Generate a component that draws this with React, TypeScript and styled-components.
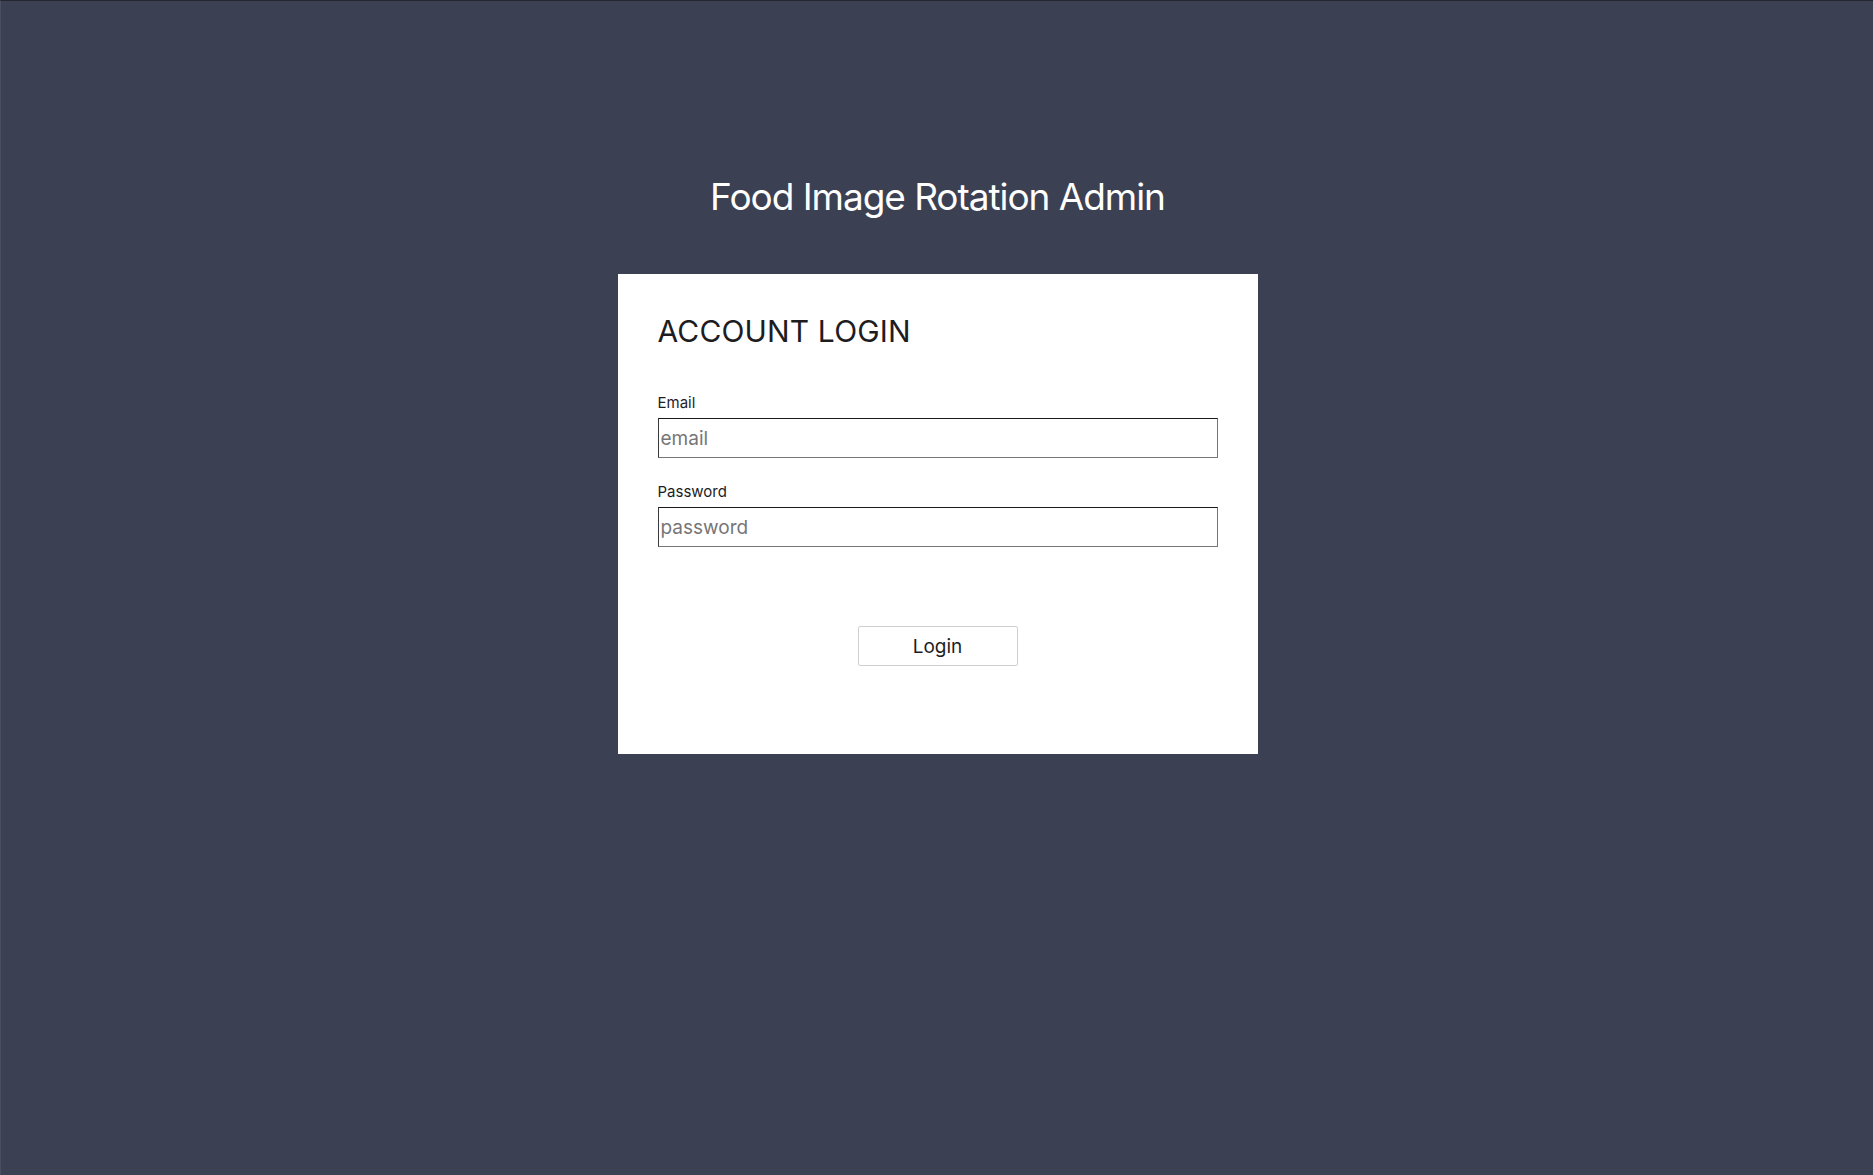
import React from "react";
import styled, { createGlobalStyle } from "styled-components";

const GlobalStyle = createGlobalStyle`
  html, body {
    margin: 0;
    padding: 0;
    height: 100%;
    background: #3c4053;
  }
  body {
    font-family: Inter, "Noto Sans", "Liberation Sans", sans-serif;
  }
  * { box-sizing: border-box; }
`;

const Page = styled.main`
  min-height: 100vh;
  background: #3c4053;
  border-top: 1px solid #24262f;
  border-left: 1px solid #4a4e62;
  display: flex;
  flex-direction: column;
  align-items: center;
  padding-top: 173px;
  padding-left: 1px;
`;

const Title = styled.h1`
  margin: 0 0 55px;
  font-size: 37px;
  font-weight: 400;
  line-height: 45px;
  color: #ffffff;
  letter-spacing: -1.05px;
`;

const Card = styled.section`
  width: 640px;
  height: 480px;
  background: #ffffff;
  padding: 39px 40px 40px;
  display: flex;
  flex-direction: column;
`;

const Heading = styled.h2`
  margin: 0 0 44px;
  font-size: 30px;
  font-weight: 400;
  line-height: 36px;
  color: #1d1d1f;
  letter-spacing: 0.15px;
`;

const Form = styled.form`
  display: flex;
  flex-direction: column;
  gap: 24px;
`;

const Field = styled.div`
  display: flex;
  flex-direction: column;
  gap: 6px;
`;

const Label = styled.label`
  font-size: 15px;
  line-height: 19px;
  color: #1d1d1f;
`;

const Input = styled.input`
  width: 560px;
  height: 40px;
  padding: 0 2px;
  margin: 0;
  font-family: Inter, "Noto Sans", "Liberation Sans", sans-serif;
  font-size: 19px;
  color: #1d1d1f;
  background: #ffffff;
  border: 1px solid #767676;
  border-top-color: #1a1a1a;
  border-left-color: #3a3a3a;
  border-radius: 0;
  outline: none;
  &::placeholder {
    color: #767676;
  }
`;

const ButtonRow = styled.div`
  display: flex;
  justify-content: center;
  margin-top: 55px;
`;

const Button = styled.button`
  width: 160px;
  height: 40px;
  background: #ffffff;
  border: 1px solid #cfcfcf;
  border-radius: 2px;
  font-family: Inter, "Noto Sans", "Liberation Sans", sans-serif;
  font-size: 19px;
  color: #1d1d1f;
  cursor: pointer;
`;

export default function App() {
  return (
    <>
      <GlobalStyle />
      <Page>
        <Title>Food Image Rotation Admin</Title>
        <Card>
          <Heading>ACCOUNT LOGIN</Heading>
          <Form onSubmit={(e) => e.preventDefault()}>
            <Field>
              <Label htmlFor="email">Email</Label>
              <Input id="email" type="email" placeholder="email" />
            </Field>
            <Field>
              <Label htmlFor="password">Password</Label>
              <Input id="password" type="password" placeholder="password" />
            </Field>
            <ButtonRow>
              <Button type="submit">Login</Button>
            </ButtonRow>
          </Form>
        </Card>
      </Page>
    </>
  );
}
